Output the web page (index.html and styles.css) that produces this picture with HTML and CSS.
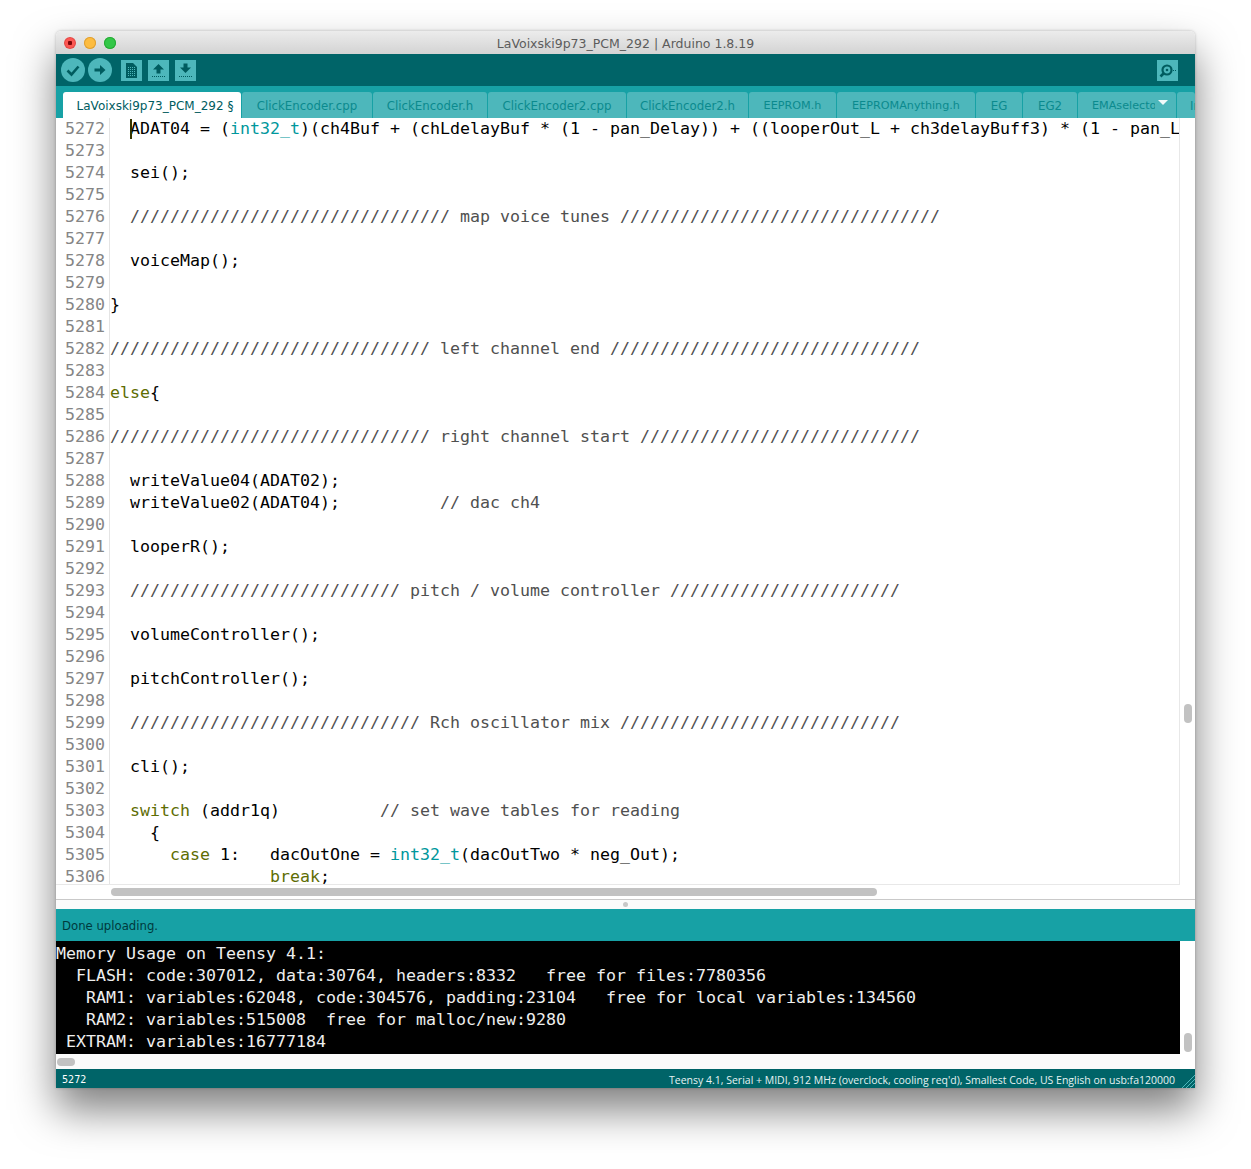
FILE: index.html
```html
<!DOCTYPE html>
<html lang="en">
  <head>
    <meta charset="UTF-8" />
    <title>LaVoixski9p73_PCM_292 | Arduino 1.8.19</title>
    <link rel="stylesheet" href="styles.css">
  </head>
  <body>
    <div class="window">
      <!-- Title bar -->
      <div class="titlebar">
        <div class="lights">
          <span class="light light-close"></span>
          <span class="light light-min"></span>
          <span class="light light-max"></span>
        </div>
        <div class="title">LaVoixski9p73_PCM_292 | Arduino 1.8.19</div>
      </div>
      <!-- Toolbar -->
      <div class="toolbar">
        <span class="tool-round">
          <svg width="24" height="24" viewBox="0 0 24 24"><path d="M6.500 12.500l4 4 7-8" fill="none" stroke="#005c5f" stroke-width="2.600"/></svg>
        </span>
        <span class="tool-round tool-upload">
          <svg width="24" height="24" viewBox="0 0 24 24"><path d="M6.500 10.500h5.500v-3.500l5.500 5-5.500 5v-3.500h-5.500z" fill="#005c5f"/></svg>
        </span>
        <span class="tool-square tool-new">
          <svg width="21" height="21" viewBox="0 0 21 21"><path d="M5 3h7l4 4v11h-11z" fill="#005c5f"/><path d="M7 7.500h7M7 9.500h7M7 11.500h7M7 13.500h7M7 15.500h7" stroke="#4db7bb" stroke-width="1" stroke-dasharray="1 1"/></svg>
        </span>
        <span class="tool-square">
          <svg width="21" height="21" viewBox="0 0 21 21"><path d="M10.500 4l5.500 5.500h-3.500v4h-4v-4h-3.500z" fill="#005c5f"/><path d="M4 16.500h13" stroke="#005c5f" stroke-width="1" stroke-dasharray="1 1"/></svg>
        </span>
        <span class="tool-square">
          <svg width="21" height="21" viewBox="0 0 21 21"><path d="M8.500 3.500h4v4h3.500l-5.500 5.500-5.500-5.500h3.500z" fill="#005c5f"/><path d="M4 16.500h13" stroke="#005c5f" stroke-width="1" stroke-dasharray="1 1"/></svg>
        </span>
        <span class="tool-square tool-serial">
          <svg width="21" height="21" viewBox="0 0 21 21"><circle cx="10" cy="10" r="4.500" fill="none" stroke="#005c5f" stroke-width="2.200"/><circle cx="10" cy="10" r="1.300" fill="#005c5f"/><path d="M6.500 13.500l-3 3" stroke="#005c5f" stroke-width="2.600"/><path d="M16 10.500h3.500" stroke="#005c5f" stroke-width="1" stroke-dasharray="1 1"/></svg>
        </span>
      </div>
      <!-- Tabs -->
      <div class="tabs">
        <div class="tab active">LaVoixski9p73_PCM_292 §</div>
        <div class="tab">ClickEncoder.cpp</div>
        <div class="tab">ClickEncoder.h</div>
        <div class="tab">ClickEncoder2.cpp</div>
        <div class="tab">ClickEncoder2.h</div>
        <div class="tab tab-caps">EEPROM.h</div>
        <div class="tab tab-caps">EEPROMAnything.h</div>
        <div class="tab">EG</div>
        <div class="tab">EG2</div>
        <div class="tab tab-menu"><span class="tab-clip">EMAselector.h</span><span class="tab-arrow"></span></div>
        <div class="tab tab-last">Interp.h</div>
      </div>
      <!-- Editor -->
      <div class="editor-pane">
        <div class="editor-main">
          <div class="editor">
            <pre class="gutter">5272
5273
5274
5275
5276
5277
5278
5279
5280
5281
5282
5283
5284
5285
5286
5287
5288
5289
5290
5291
5292
5293
5294
5295
5296
5297
5298
5299
5300
5301
5302
5303
5304
5305
5306</pre>
            <pre class="code">  <span class="caret"></span>ADAT04 = (<span class="type">int32_t</span>)(ch4Buf + (chLdelayBuf * (1 - pan_Delay)) + ((looperOut_L + ch3delayBuff3) * (1 - pan_L

  sei();

  <span class="comment">//////////////////////////////// map voice tunes ////////////////////////////////</span>

  voiceMap();

}

<span class="comment">//////////////////////////////// left channel end ///////////////////////////////</span>

<span class="kw">else</span>{

<span class="comment">//////////////////////////////// right channel start ////////////////////////////</span>

  writeValue04(ADAT02);
  writeValue02(ADAT04);          <span class="comment">// dac ch4</span>

  looperR();

  <span class="comment">/////////////////////////// pitch / volume controller ///////////////////////</span>

  volumeController();

  pitchController();

  <span class="comment">///////////////////////////// Rch oscillator mix ////////////////////////////</span>

  cli();

  <span class="kw">switch</span> (addr1q)          <span class="comment">// set wave tables for reading</span>
    {
      <span class="kw">case</span> 1:   dacOutOne = <span class="type">int32_t</span>(dacOutTwo * neg_Out);
                <span class="kw">break</span>;</pre>
          </div>
          <div class="hbar hbar-editor"><span class="thumb-h"></span></div>
        </div>
        <div class="vbar vbar-editor"><span class="thumb-v"></span></div>
      </div>
      <div class="divider"><span class="grab"></span></div>
      <!-- Status -->
      <div class="status">Done uploading.</div>
      <!-- Console -->
      <div class="console-pane">
        <div class="console-main">
          <pre class="console">Memory Usage on Teensy 4.1:
  FLASH: code:307012, data:30764, headers:8332   free for files:7780356
   RAM1: variables:62048, code:304576, padding:23104   free for local variables:134560
   RAM2: variables:515008  free for malloc/new:9280
 EXTRAM: variables:16777184</pre>
          <div class="hbar hbar-console"><span class="thumb-h"></span></div>
        </div>
        <div class="vbar vbar-console"><span class="thumb-v"></span></div>
      </div>
      <!-- Footer -->
      <div class="footer">
        <span class="line-no">5272</span>
        <span class="board">Teensy 4.1, Serial + MIDI, 912 MHz (overclock, cooling req'd), Smallest Code, US English on usb:fa120000</span>
        <svg class="grip" width="14" height="14" viewBox="0 0 14 14"><path d="M1 14L14 1M5 14L14 5M9 14L14 9" stroke="#4db7bb" stroke-width="1"/></svg>
      </div>
    </div>
  </body>
</html>
```

FILE: styles.css
```css
* {
  margin: 0;
  padding: 0;
  box-sizing: border-box;
}
body {
  background-color: #fff;
  padding: 31px 56px 0 56px;
  height: 1169px;
  overflow: hidden;
  font-family: "DejaVu Sans", sans-serif;
}
pre {
  font-family: "DejaVu Sans Mono", monospace;
  font-size: 16.61px;
  line-height: 22px;
}
.window {
  width: 1139px;
  height: 1057px;
  display: flex;
  flex-direction: column;
  background-color: #fff;
  border-radius: 5px 5px 0 0;
  box-shadow: 0 22px 42px rgba(0, 0, 0, 0.5), 0 0 3px rgba(0, 0, 0, 0.25);
}
/* Title bar */
.titlebar {
  height: 23px;
  flex: none;
  display: flex;
  align-items: center;
  background: linear-gradient(#ececec, #d3d3d3);
  border-radius: 5px 5px 0 0;
}
.lights {
  display: flex;
  gap: 8px;
  padding-left: 8px;
}
.light {
  width: 12px;
  height: 12px;
  border-radius: 50%;
}
.light-close {
  background-color: #fc5753;
  box-shadow: inset 0 0 0 1px #df4744;
  background-image: radial-gradient(circle, #7e0508 2px, transparent 2.5px);
}
.light-min {
  background-color: #fdbc40;
  box-shadow: inset 0 0 0 1px #de9f34;
}
.light-max {
  background-color: #33c748;
  box-shadow: inset 0 0 0 1px #27aa35;
}
.title {
  flex: 1;
  text-align: center;
  font-size: 12.5px;
  padding-top: 2px;
  color: #5c5c5c;
  margin-left: -60px;
}
/* Toolbar */
.toolbar {
  height: 32px;
  flex: none;
  display: flex;
  align-items: center;
  background-color: #006468;
  padding-left: 5px;
  padding-right: 17px;
}
.tool-round {
  width: 24px;
  height: 24px;
  border-radius: 50%;
  background-color: #4db7bb;
  margin-right: 3px;
  display: flex;
}
.tool-upload {
  margin-right: 9px;
}
.tool-square {
  width: 21px;
  height: 21px;
  background-color: #4db7bb;
  margin-right: 6px;
  display: flex;
}
.tool-serial {
  margin-left: auto;
  margin-right: 0;
}
/* Tabs */
.tabs {
  height: 32px;
  flex: none;
  display: grid;
  grid-template-columns: 178px 130px 114px 138px 121px 87px 138px 46px 54px 98px 18px;
  column-gap: 1px;
  padding: 6px 0 0 7px;
  background-color: #17a1a5;
  overflow: hidden;
}
.tab {
  background-color: #4db7bb;
  color: #0b8a8e;
  border-radius: 3px 3px 0 0;
  font-size: 11.8px;
  line-height: 28px;
  text-align: center;
  white-space: nowrap;
  overflow: hidden;
}
.tab.active {
  background-color: #fff;
  color: #005c5f;
  font-size: 12px;
  padding-left: 6px;
}
.tab-caps {
  font-size: 11.2px;
}
.tab-menu {
  display: flex;
  padding-left: 14px;
  font-size: 11.2px;
}
.tab-clip {
  width: 63px;
  overflow: hidden;
}
.tab-arrow {
  width: 0;
  height: 0;
  margin: 8px 0 0 3px;
  border-left: 5px solid transparent;
  border-right: 5px solid transparent;
  border-top: 5px solid #f2fafa;
}
.tab-last {
  text-align: left;
  padding-left: 13px;
}
/* Editor */
.editor-pane {
  height: 782px;
  flex: none;
  display: flex;
  border-bottom: 1px solid #c9c9c9;
}
.editor-main {
  flex: 1;
  min-width: 0;
}
.editor {
  height: 767px;
  display: flex;
  overflow: hidden;
  border-bottom: 1px solid #e8e8e8;
  border-right: 1px solid #e8e8e8;
}
.gutter {
  width: 54px;
  flex: none;
  padding-right: 4px;
  text-align: right;
  color: #858585;
  border-right: 1px solid #e4e4e4;
}
.code {
  flex: 1;
  min-width: 0;
  overflow: hidden;
  color: #000;
}
.caret {
  display: inline-block;
  position: relative;
  width: 0;
}
.caret::after {
  content: "";
  position: absolute;
  left: 0;
  top: -15px;
  width: 2px;
  height: 20px;
  background-color: #333300;
}
.type {
  color: #00979c;
}
.kw {
  color: #5e6d03;
}
.comment {
  color: #505050;
}
.hbar {
  height: 15px;
  padding-top: 3px;
}
.hbar-editor {
  padding-left: 55px;
}
.hbar-console {
  padding-left: 1px;
  padding-top: 4px;
  background-color: #fbfbfb;
}
.thumb-h {
  display: block;
  height: 8px;
  border-radius: 4px;
  background-color: #c2c2c2;
}
.hbar-editor .thumb-h {
  width: 766px;
}
.hbar-console .thumb-h {
  width: 18px;
}
.vbar {
  width: 15px;
  flex: none;
  padding-left: 4px;
}
.vbar-editor {
  padding-top: 586px;
}
.vbar-console {
  padding-top: 92px;
}
.thumb-v {
  display: block;
  width: 8px;
  height: 19px;
  border-radius: 4px;
  background-color: #c2c2c2;
}
.divider {
  height: 9px;
  flex: none;
  display: flex;
  justify-content: center;
  align-items: center;
  background-color: #fbfbfb;
}
.grab {
  width: 5px;
  height: 5px;
  border-radius: 50%;
  background-color: #c8c8c8;
}
/* Status */
.status {
  height: 32px;
  flex: none;
  background-color: #17a1a5;
  color: #003a3d;
  font-size: 11.7px;
  line-height: 34px;
  padding-left: 6px;
}
/* Console */
.console-pane {
  height: 128px;
  flex: none;
  display: flex;
}
.console-main {
  flex: 1;
  min-width: 0;
}
.console {
  height: 113px;
  padding-top: 2px;
  background-color: #000;
  color: #eee;
  overflow: hidden;
}
/* Footer */
.footer {
  height: 19px;
  flex: none;
  display: flex;
  justify-content: space-between;
  align-items: center;
  position: relative;
  background-color: #006468;
  color: #fff;
  padding: 2px 20px 0 6px;
}
.line-no {
  font-size: 9.6px;
}
.board {
  font-family: "Open Sans", sans-serif;
  font-size: 10.5px;
  color: #e6f2f2;
}
.grip {
  position: absolute;
  right: 0;
  bottom: 0;
}
```
